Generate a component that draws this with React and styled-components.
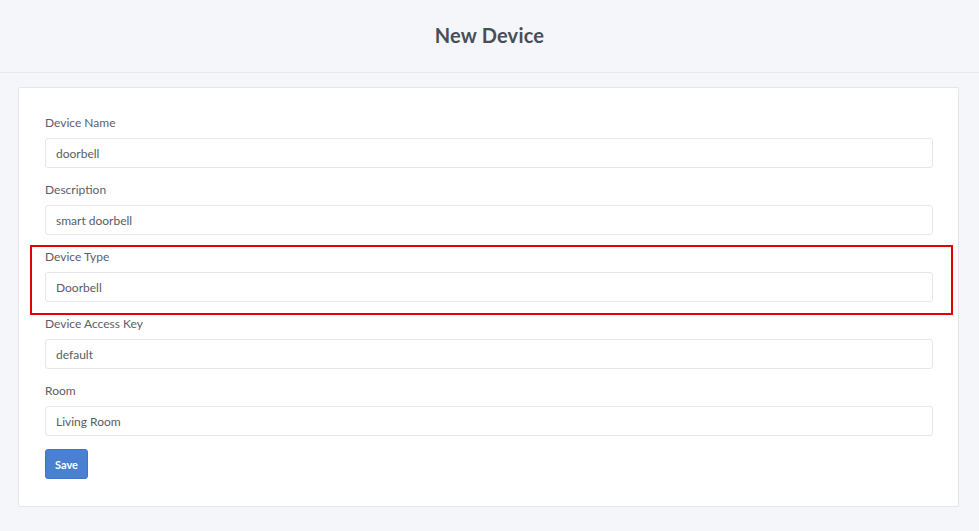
import React, { useState } from 'react';
import styled, { createGlobalStyle } from 'styled-components';

const GlobalStyle = createGlobalStyle`
  * { box-sizing: border-box; }
  body {
    margin: 0;
    background: #f5f6fa;
    font-family: 'Lato', 'Open Sans', sans-serif;
  }
`;

const fields = [
  { key: 'name', label: 'Device Name', value: 'doorbell' },
  { key: 'description', label: 'Description', value: 'smart doorbell' },
  { key: 'type', label: 'Device Type', value: 'Doorbell', highlight: true },
  { key: 'accessKey', label: 'Device Access Key', value: 'default' },
  { key: 'room', label: 'Room', value: 'Living Room' },
];

const NewDevicePage = () => {
  const [values, setValues] = useState(
    Object.fromEntries(fields.map((f) => [f.key, f.value]))
  );

  const handleSubmit = (e) => {
    e.preventDefault();
  };

  return (
    <>
      <GlobalStyle />
      <Header>
        <Title>New Device</Title>
      </Header>
      <Main>
        <Card>
          <Form onSubmit={handleSubmit}>
            {fields.map((f) => (
              <Group key={f.key} highlight={f.highlight}>
                <Label htmlFor={f.key}>{f.label}</Label>
                <Input
                  id={f.key}
                  type="text"
                  value={values[f.key]}
                  onChange={(e) => setValues({ ...values, [f.key]: e.target.value })}
                />
              </Group>
            ))}
            <SaveButton type="submit">Save</SaveButton>
          </Form>
        </Card>
      </Main>
    </>
  );
};

// Styled components
const Header = styled.header`
  height: 73px;
  display: flex;
  align-items: center;
  justify-content: center;
  border-bottom: 1px solid #e5e7ed;
  background: #f5f6fa;
`;

const Title = styled.h1`
  margin: 0;
  padding-bottom: 2px;
  font-size: 20px;
  font-weight: 700;
  color: #474e57;
  letter-spacing: 0.2px;
`;

const Main = styled.main`
  padding: 14px 20px 25px 18px;
`;

const Card = styled.div`
  background: #fff;
  border: 1px solid #e4e6eb;
  border-radius: 2px;
  padding: 25px 25px 27px 26px;
`;

const Form = styled.form`
  display: flex;
  flex-direction: column;
  align-items: flex-start;
`;

const Group = styled.div`
  position: relative;
  width: 100%;
  display: flex;
  flex-direction: column;
  gap: 6px;
  margin-bottom: 12px;

  &::after {
    content: '';
    display: ${({ highlight }) => (highlight ? 'block' : 'none')};
    position: absolute;
    top: -2px;
    left: -15px;
    right: -20px;
    bottom: -13px;
    border: 2px solid #e30000;
    pointer-events: none;
  }
`;

const Label = styled.label`
  padding-top: 1px;
  font-size: 12px;
  line-height: 18px;
  color: #5b6068;
`;

const Input = styled.input`
  width: 100%;
  height: 30px;
  padding: 0 10px;
  font-family: inherit;
  font-size: 12px;
  color: #565d66;
  background: #fff;
  border: 1px solid #e4e6ec;
  border-radius: 3px;
  outline: none;
`;

const SaveButton = styled.button`
  margin-top: 1px;
  width: 43px;
  height: 30px;
  padding: 0;
  background: #4a80d2;
  color: #fff;
  border: 1px solid #3f74c6;
  border-radius: 3px;
  font-family: inherit;
  font-size: 11px;
  font-weight: 700;
  cursor: pointer;
`;

export default NewDevicePage;
